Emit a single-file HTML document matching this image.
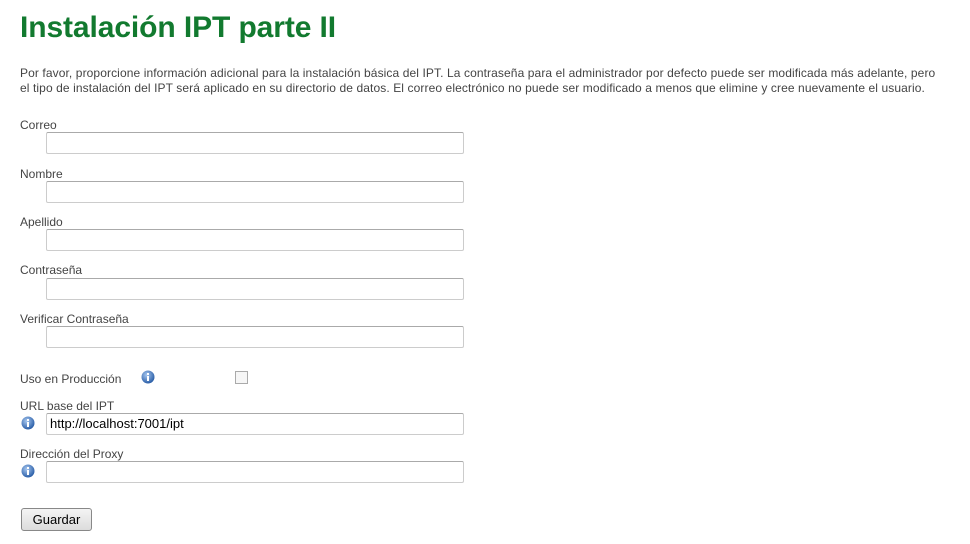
<!DOCTYPE html>
<html><head><meta charset="utf-8"><style>
body{margin:0;width:970px;height:544px;background:#fff;font-family:"Liberation Sans",Arial,sans-serif;position:relative;overflow:hidden}
h1{position:absolute;left:20px;top:11px;margin:0;font-size:30px;font-weight:bold;color:#127a2f;letter-spacing:-0.1px}
p{position:absolute;left:20px;top:66px;margin:0;font-size:12px;line-height:15px;color:#444;width:935px;letter-spacing:0.1px}
.l{position:absolute;left:20px;font-size:12px;color:#444}
.i{position:absolute;left:46px;width:416px;height:20px;border:1px solid #ccc;border-top-color:#aaa;border-radius:2px;background:#fff;font-size:13px;color:#000;line-height:20px;box-sizing:content-box}
.i span{padding-left:3px}
.ic{position:absolute;width:14px;height:14px}
.btn{position:absolute;left:21px;top:508px;width:69px;height:21px;border:1px solid #888;border-radius:3px;background:linear-gradient(#f4f4f4,#dcdcdc);font-size:13px;text-align:center;line-height:21px;color:#000}
.cb{position:absolute;left:235px;top:371px;width:11px;height:11px;border:1px solid #aaa;background:#f6f6f6}
</style></head><body>
<h1>Instalación IPT parte II</h1>
<p>Por favor, proporcione información adicional para la instalación básica del IPT. La contraseña para el administrador por defecto puede ser modificada más adelante, pero<br>el tipo de instalación del IPT será aplicado en su directorio de datos. El correo electrónico no puede ser modificado a menos que elimine y cree nuevamente el usuario.</p>
<div class="l" style="top:118px">Correo</div><div class="i" style="top:132px"></div>
<div class="l" style="top:167px">Nombre</div><div class="i" style="top:181px"></div>
<div class="l" style="top:215px">Apellido</div><div class="i" style="top:229px"></div>
<div class="l" style="top:263px">Contraseña</div><div class="i" style="top:278px"></div>
<div class="l" style="top:312px">Verificar Contraseña</div><div class="i" style="top:326px"></div>
<div class="l" style="top:372px">Uso en Producción</div>
<svg class="ic" style="left:141px;top:370px" viewBox="0 0 14 14"><defs><radialGradient id="g" cx="40%" cy="35%" r="65%"><stop offset="0" stop-color="#a8c8f0"/><stop offset="1" stop-color="#2b5fa8"/></radialGradient></defs><circle cx="7" cy="7" r="6.5" fill="url(#g)"/><rect x="6" y="6" width="2" height="5" fill="#fff"/><rect x="6" y="3" width="2" height="2" fill="#fff"/></svg>
<div class="cb"></div>
<div class="l" style="top:399px">URL base del IPT</div>
<svg class="ic" style="left:21px;top:416px" viewBox="0 0 14 14"><circle cx="7" cy="7" r="6.5" fill="url(#g)"/><rect x="6" y="6" width="2" height="5" fill="#fff"/><rect x="6" y="3" width="2" height="2" fill="#fff"/></svg>
<div class="i" style="top:413px"><span>http://localhost:7001/ipt</span></div>
<div class="l" style="top:447px">Dirección del Proxy</div>
<svg class="ic" style="left:21px;top:464px" viewBox="0 0 14 14"><circle cx="7" cy="7" r="6.5" fill="url(#g)"/><rect x="6" y="6" width="2" height="5" fill="#fff"/><rect x="6" y="3" width="2" height="2" fill="#fff"/></svg>
<div class="i" style="top:461px"></div>
<div class="btn">Guardar</div>
</body></html>
